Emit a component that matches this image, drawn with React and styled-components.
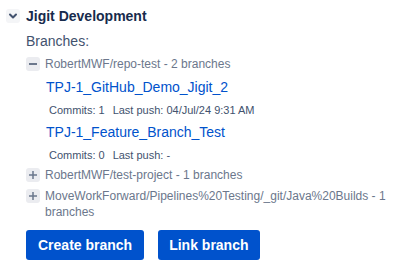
import React from "react";
import styled, { createGlobalStyle } from "styled-components";

const GlobalStyle = createGlobalStyle`
  body {
    margin: 0;
    background: #fff;
    font-family: "Liberation Sans", Arial, sans-serif;
  }
`;

const Panel = styled.div`
  padding: 6px 0 0 6px;
  width: 408px;
`;

const Header = styled.div`
  display: flex;
  align-items: center;
  gap: 6px;
  height: 20px;
`;

const ToggleBox = styled.span`
  display: flex;
  align-items: center;
  justify-content: center;
  width: 14px;
  height: 14px;
  border-radius: 3px;
  background: ${(p) => (p.$light ? "#f4f5f7" : "#ebecf0")};
  color: ${(p) => (p.$light ? "#42526e" : "#6b778c")};
  flex-shrink: 0;
`;

const Title = styled.h2`
  margin: 0;
  font-size: 14px;
  line-height: 20px;
  font-weight: 700;
  color: #172b4d;
`;

const Body = styled.div`
  padding-left: 20px;
  display: flex;
  flex-direction: column;
`;

const Label = styled.div`
  margin-top: 5px;
  font-size: 14px;
  line-height: 20px;
  color: #42526e;
`;

const Repo = styled.div`
  margin-top: 5px;
`;

const RepoRow = styled.div`
  display: flex;
  align-items: flex-start;
  gap: 5px;
  font-size: 12px;
  line-height: 16px;
  color: #6b778c;

  ${ToggleBox} {
    margin-top: 1px;
  }
`;

const BranchList = styled.div`
  padding-left: 20px;
`;

const Branch = styled.div`
  margin-top: 5px;
`;

const BranchLink = styled.a`
  display: block;
  font-size: 14px;
  line-height: 20px;
  color: #0052cc;
  text-decoration: none;
`;

const Meta = styled.div`
  margin-top: 6px;
  padding-left: 3px;
  display: flex;
  gap: 8px;
  font-size: 11px;
  line-height: 14px;
  color: #42526e;
`;

const Actions = styled.div`
  display: flex;
  gap: 14px;
  margin-top: 10px;
`;

const Button = styled.button`
  height: 30px;
  padding: 0 ${(p) => (p.$wide ? "12px" : "11px")};
  border: none;
  border-radius: 3px;
  background: #0052cc;
  color: #fff;
  font-family: inherit;
  font-size: 14px;
  font-weight: 700;
  cursor: pointer;
`;

const Chevron = () => (
  <svg width="10" height="10" viewBox="0 0 10 10">
    <path d="M2 3.5 L5 6.5 L8 3.5" fill="none" stroke="currentColor" strokeWidth="2" strokeLinecap="round" strokeLinejoin="round" />
  </svg>
);

const Minus = () => (
  <svg width="10" height="10" viewBox="0 0 10 10">
    <path d="M1 5 H9" stroke="currentColor" strokeWidth="2" />
  </svg>
);

const Plus = () => (
  <svg width="10" height="10" viewBox="0 0 10 10">
    <path d="M1 5 H9 M5 1 V9" stroke="currentColor" strokeWidth="1.5" />
  </svg>
);

const repos = [
  {
    name: "RobertMWF/repo-test - 2 branches",
    open: true,
    branches: [
      { name: "TPJ-1_GitHub_Demo_Jigit_2", commits: 1, push: "04/Jul/24 9:31 AM" },
      { name: "TPJ-1_Feature_Branch_Test", commits: 0, push: "-" },
    ],
  },
  { name: "RobertMWF/test-project - 1 branches", open: false, branches: [] },
  {
    name: "MoveWorkForward/Pipelines%20Testing/_git/Java%20Builds - 1 branches",
    open: false,
    branches: [],
  },
];

export default function App() {
  return (
    <Panel>
      <GlobalStyle />
      <Header>
        <ToggleBox $light>
          <Chevron />
        </ToggleBox>
        <Title>Jigit Development</Title>
      </Header>
      <Body>
        <Label>Branches:</Label>
        {repos.map((repo) => (
          <Repo key={repo.name}>
            <RepoRow>
              <ToggleBox>{repo.open ? <Minus /> : <Plus />}</ToggleBox>
              <span>{repo.name}</span>
            </RepoRow>
            {repo.open && (
              <BranchList>
                {repo.branches.map((b) => (
                  <Branch key={b.name}>
                    <BranchLink href="#">{b.name}</BranchLink>
                    <Meta>
                      <span>Commits: {b.commits}</span>
                      <span>Last push: {b.push}</span>
                    </Meta>
                  </Branch>
                ))}
              </BranchList>
            )}
          </Repo>
        ))}
        <Actions>
          <Button $wide>Create branch</Button>
          <Button>Link branch</Button>
        </Actions>
      </Body>
    </Panel>
  );
}
